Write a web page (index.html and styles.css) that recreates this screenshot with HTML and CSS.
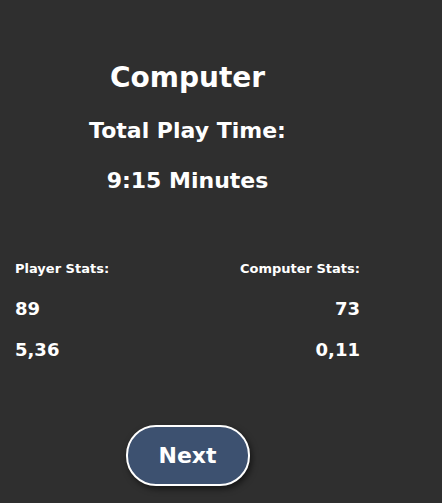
FILE: index.html
```html
<!DOCTYPE html>
<html>
<head>
<meta charset="utf-8">
<link rel="stylesheet" href="styles.css">
</head>
<body>
<div class="screen">
  <div class="header">
    <h1 class="winner">Computer</h1>
    <h2 class="time-label">Total Play Time:</h2>
    <h2 class="time-value">9:15 Minutes</h2>
  </div>
  <div class="stats">
    <div class="row labels">
      <span>Player Stats:</span>
      <span>Computer Stats:</span>
    </div>
    <div class="row values">
      <span>89</span>
      <span>73</span>
    </div>
    <div class="row values">
      <span>5,36</span>
      <span>0,11</span>
    </div>
  </div>
  <div class="actions">
    <button class="next">Next</button>
  </div>
</div>
</body>
</html>
```

FILE: styles.css
```css
html, body {
  margin: 0;
  padding: 0;
  background: #2f2f2f;
  height: 100%;
}
body {
  font-family: "Comic Sans MS", "DejaVu Sans", sans-serif;
  color: #ffffff;
}
.screen {
  width: 375px;
  box-sizing: border-box;
  padding: 0 15px;
  display: flex;
  flex-direction: column;
}
.header {
  display: flex;
  flex-direction: column;
  align-items: center;
  padding-top: 56px;
}
.winner {
  margin: 0;
  font-size: 28px;
  font-weight: bold;
  line-height: 44px;
}
.time-label, .time-value {
  margin: 0;
  font-size: 22px;
  font-weight: bold;
  line-height: 28px;
}
.time-label { margin-top: 17px; }
.time-value { margin-top: 22px; }
.stats {
  margin-top: 66px;
  display: flex;
  flex-direction: column;
}
.row {
  display: flex;
  justify-content: space-between;
}
.labels {
  font-size: 13px;
  font-weight: bold;
  line-height: 16px;
}
.values {
  font-size: 18px;
  font-weight: bold;
  line-height: 24px;
  margin-top: 20px;
}
.values + .values { margin-top: 17px; }
.actions {
  display: flex;
  justify-content: center;
  margin-top: 63px;
}
.next {
  width: 124px;
  height: 61px;
  border-radius: 30px;
  border: 2px solid #ffffff;
  background: #3d5170;
  color: #ffffff;
  font-family: inherit;
  font-size: 22px;
  font-weight: bold;
  box-shadow: 2px 3px 6px rgba(0,0,0,0.55);
}
```
